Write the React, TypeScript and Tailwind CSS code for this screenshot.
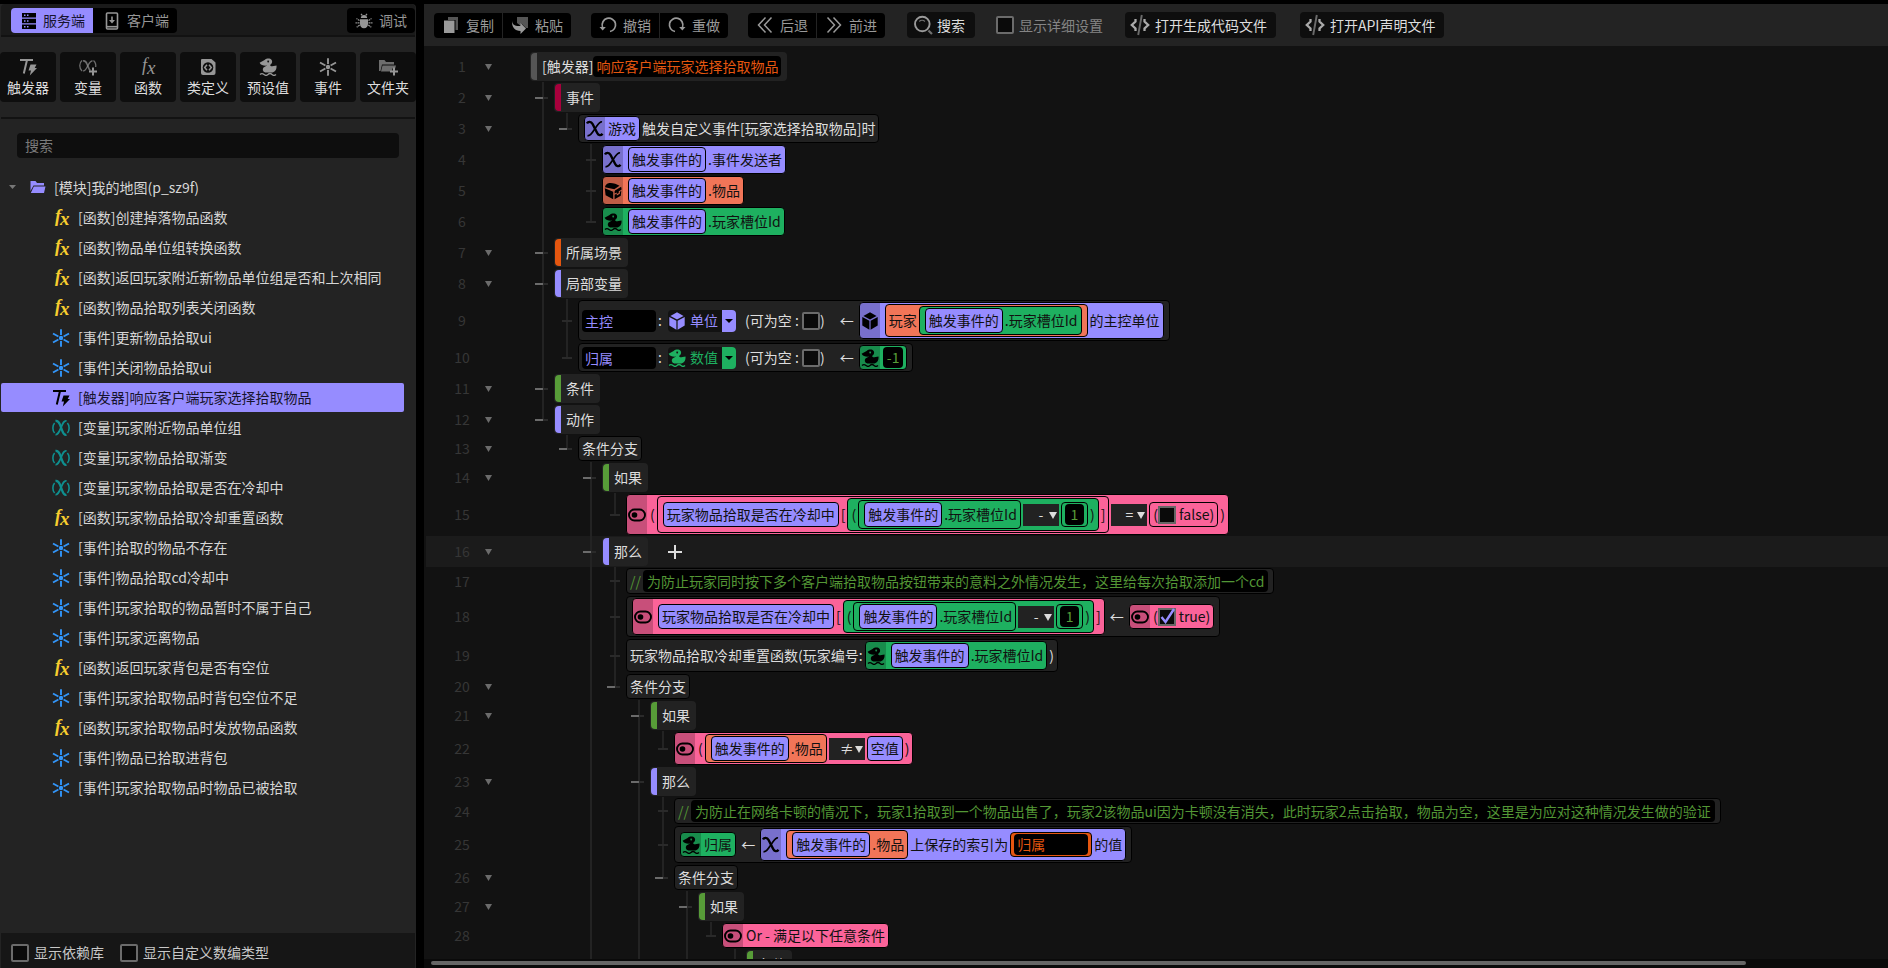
import { useState } from 'react';
import type { ReactNode } from 'react';

type IconProps = { className?: string };

const FxIcon = ({ className = '' }: IconProps) => (
    <svg viewBox="0 0 18 18" className={`overflow-visible ${className}`} fill="currentColor">
        <text x="3" y="13" fontFamily="Liberation Serif, serif" fontStyle="italic" fontSize="18">f</text>
        <text x="8" y="16" fontFamily="Liberation Serif, serif" fontStyle="italic" fontSize="19">x</text>
    </svg>
);

const EventIcon = ({ className = '' }: IconProps) => (
    <svg viewBox="0 0 18 18" className={className} stroke="currentColor" strokeWidth="1.9" fill="none">
        <path d="M9 .2V6M9 12v5.800M1 4.500l5.400 3M11.600 10.500l5.400 3M17 4.500l-5.400 3M6.400 10.500l-5.400 3" />
        <circle cx="9" cy="9" r="2.200" fill="currentColor" stroke="none" />
    </svg>
);

const TriggerIcon = ({ className = '' }: IconProps) => (
    <svg viewBox="0 0 18 18" className={className}>
        <path d="M1 2h13M8 2L4.800 15.500" stroke="currentColor" strokeWidth="2" fill="none" />
        <path d="M11.500 6.500h6l-1.800 3.500h2.300L10.800 17.500l1.200-5H9.500z" fill="currentColor" />
    </svg>
);

const VarIcon = ({ className = '' }: IconProps) => (
    <svg viewBox="0 0 18 18" className={className} stroke="currentColor" fill="none">
        <path d="M2.600 4C.3 6.500.3 11.500 2.600 14M15.400 4c2.300 2.500 2.300 7.500 0 10" strokeWidth="1.600" />
        <path d="M3.500 2c2.800-.5 3.500 1.500 4.500 3.700l2.300 6.200c.8 2.300 1.800 4.500 4.200 3.900" strokeWidth="2.300" />
        <path d="M14.500 2c-2.500-.6-3.500 2-5.500 6.500-2 4.500-3 7.500-5.500 7" strokeWidth="1.800" />
    </svg>
);

const VarAddIcon = ({ className = '' }: IconProps) => (
    <svg viewBox="0 0 20 18" className={className} stroke="currentColor" fill="none">
        <path d="M4 2.500C1 5 1 10 4 13M15.500 2.500c2.200 2 2.600 4 2.200 6.500" strokeWidth="1.300" opacity=".7" />
        <path d="M5 3c2-.6 3 .4 4 3l1.500 3.500c.5 1.500 1 2.500 2 3" strokeWidth="1.700" opacity=".7" />
        <path d="M14.500 3c-2-.3-3 1.500-4.700 4.700C8 11.500 7 13.300 5 12.800" strokeWidth="1.300" opacity=".7" />
        <path d="M15 9.500v8M11 13.500h8" strokeWidth="2" />
    </svg>
);

const ClassIcon = ({ className = '' }: IconProps) => (
    <svg viewBox="0 0 18 18" className={className}>
        <path d="M3 1h9.500L16.500 4.500V15a2 2 0 0 1-2 2H4a2 2 0 0 1-2-2V2a1 1 0 0 1 1-1z" fill="currentColor" />
        <circle cx="9" cy="9.500" r="5.300" fill="#0e0e0e" />
        <path d="M8 6.700L5.700 9.500 8 12.300M10 6.700l2.300 2.800L10 12.300" stroke="currentColor" strokeWidth="1.500" fill="none" />
    </svg>
);

const DuckIcon = ({ className = '' }: IconProps) => (
    <svg viewBox="0 0 18 18" className={className}>
        <path
            fillRule="evenodd"
            d="M.6 4.800L5.600 2C7.500.4 11 0 12.500 1.800c1.300 1.700.5 3.800-1.200 5-.5.800.5 1.700 2 1.500l4.200-.8c.4 3.300-1 6.200-4 7H6.300c-2.600-.8-3.200-3.200-1.800-5L8 7.600C5 7.800 2 7.600.6 4.800zM9.200 2.600a.9.900 0 1 0 .01 0z"
            fill="currentColor"
        />
        <path d="M1 16.500c1.300-1.200 2.600-1.200 4 0s2.700 1.200 4 0 2.700-1.200 4 0 2.700 1.200 4 0" stroke="currentColor" strokeWidth="1.400" fill="none" />
    </svg>
);

const FolderAddIcon = ({ className = '' }: IconProps) => (
    <svg viewBox="0 0 20 18" className={className}>
        <path d="M1 2h5.500l1.500 2h8v2.500H4L2.500 13H1z" fill="currentColor" opacity=".7" />
        <path d="M4.500 7.500H18l-.8 3h-3v3H3z" fill="currentColor" opacity=".7" />
        <path d="M16 9.500v8M12 13.500h8" stroke="currentColor" strokeWidth="2" />
    </svg>
);

const FolderIcon = ({ className = '' }: IconProps) => (
    <svg viewBox="0 0 16 14" className={className} fill="currentColor">
        <path d="M.5 1h5L7 3h7v2.500H3.500L.5 11z" />
        <path d="M3.800 6.500H15.500L14 13H.8z" />
    </svg>
);

const ServerIcon = ({ className = '' }: IconProps) => (
    <svg viewBox="0 0 16 16" className={className}>
        <path d="M1 0h14v4.500H1zM1 5.700h14v4.600H1zM1 11.500h14V16H1z" fill="currentColor" />
        <path d="M3 2.200h1.500M6 2.200h1.500M3 8h1.500M6 8h1.500M3 13.800h1.500M6 13.800h1.500" stroke="#968cff" strokeWidth="1.400" />
    </svg>
);

const ClientIcon = ({ className = '' }: IconProps) => (
    <svg viewBox="0 0 14 18" className={className} stroke="currentColor" fill="none" strokeWidth="1.600">
        <rect x="1.500" y="1" width="11" height="16" rx="1" />
        <path d="M7 4.500V9" />
        <path d="M4 8h6l-3 3.500z" fill="currentColor" stroke="none" />
        <path d="M2 14.700h10" />
    </svg>
);

const BugIcon = ({ className = '' }: IconProps) => (
    <svg viewBox="0 0 18 16" className={className}>
        <path d="M5 6.200h8V11c0 2.500-1.500 4.200-4 4.200S5 13.500 5 11zM5.800 5c.2-2 1.500-3 3.200-3s3 1 3.200 3z" fill="currentColor" />
        <path d="M6 .8l1.400 1.800M12 .8l-1.400 1.800M4.500 7.500L1.500 5.500M4.500 9.800H.5M4.700 12l-3 2.200M13.500 7.500l3-2M13.500 9.800h4M13.300 12l3 2.200" stroke="currentColor" strokeWidth="1.200" strokeDasharray="2 .6" />
    </svg>
);

const XIcon = ({ className = '' }: IconProps) => (
    <svg viewBox="0 0 18 18" className={className} stroke="currentColor" fill="none">
        <path d="M1 3.500C2 1.600 5 .8 6.600 4l4.600 9c1.200 2.400 3.600 3 5.300.8" strokeWidth="2.400" />
        <path d="M16 2c-2.500-.6-4 2.500-6.800 6.300C6 13 4 16.500 1.500 15.500" strokeWidth="1.700" />
    </svg>
);

const ChestIcon = ({ className = '' }: IconProps) => (
    <svg viewBox="0 0 18 18" className={className} fill="currentColor">
        <path d="M4.500 1.300C7 .2 12.500 1.900 15.500 3.700L10.300 7.200 1 5.200C1.300 3.300 2.500 1.800 4.500 1.300z" />
        <path d="M.8 6.300l8.400 3.400v7.500L1.600 13.200zM10.600 9.600c.2-1 .7-1.400 1.600-1.900l4.900-3c.4 1 .5 2 .4 3.100l-2.700 1.400-.1 1.900-1.800.9-.2-1.500-2.100 1z" />
        <path d="M10.600 12.700l2-1 .3 1.700 3-1.700V9.800l1.400-.8-.5 4.800-6.200 3.400z" />
    </svg>
);

const CubeIcon = ({ className = '' }: IconProps) => (
    <svg viewBox="0 0 18 18" className={className} fill="currentColor">
        <path d="M9 .3l6.600 3.600L9 7.400 2.400 3.900z" />
        <path d="M1.300 5l7.100 3.700v9L1.300 13.600zM16.700 5L9.600 8.700v9l7.100-4.100z" />
    </svg>
);

const BoolIcon = ({ className = '' }: IconProps) => (
    <svg viewBox="0 0 18 18" className={className}>
        <rect x="1" y="3.500" width="16" height="11" rx="5.500" fill="none" stroke="currentColor" strokeWidth="1.900" />
        <circle cx="6.500" cy="9" r="2.800" fill="currentColor" />
    </svg>
);

const CopyIcon = ({ className = '' }: IconProps) => (
    <svg viewBox="0 0 16 18" className={className} fill="currentColor">
        <path d="M5 1h10v13h-2.500V4H5z" opacity=".55" />
        <path d="M1 4.500h10.500V17H1z" />
    </svg>
);

const PasteIcon = ({ className = '' }: IconProps) => (
    <svg viewBox="0 0 18 18" className={className} fill="currentColor">
        <path d="M6 1h11v11h-2L10.500 7.500v3L6 7z" opacity=".55" />
        <path d="M1 4.500c0 4 3 6 8.500 5.500V7l5.500 5.500L9.500 18v-3C4 15 .5 11 1 4.500z" />
    </svg>
);

const UndoIcon = ({ className = '' }: IconProps) => (
    <svg viewBox="0 0 18 18" className={className} stroke="currentColor" strokeWidth="1.700" fill="none">
        <path d="M3.500 11A6.700 6.700 0 1 1 11 15.500" />
        <path d="M.5 11h6.300l-3.100 3.600z" fill="currentColor" stroke="none" />
    </svg>
);

const RedoIcon = ({ className = '' }: IconProps) => (
    <svg viewBox="0 0 18 18" className={className} stroke="currentColor" strokeWidth="1.700" fill="none">
        <path d="M14.500 11A6.700 6.700 0 1 0 7 15.500" />
        <path d="M17.500 11h-6.300l3.100 3.600z" fill="currentColor" stroke="none" />
    </svg>
);

const BackIcon = ({ className = '' }: IconProps) => (
    <svg viewBox="0 0 16 18" className={className} stroke="currentColor" strokeWidth="1.500" fill="none">
        <path d="M8.500 1.500l-7 7.500 7 7.500M14.500 1.500l-7 7.500 7 7.500" />
    </svg>
);

const ForwardIcon = ({ className = '' }: IconProps) => (
    <svg viewBox="0 0 16 18" className={className} stroke="currentColor" strokeWidth="1.500" fill="none">
        <path d="M1.500 1.500l7 7.500-7 7.500M7.500 1.500l7 7.500-7 7.500" />
    </svg>
);

const SearchIcon = ({ className = '' }: IconProps) => (
    <svg viewBox="0 0 20 20" className={className} stroke="currentColor" fill="none">
        <circle cx="9.300" cy="9" r="7.300" strokeWidth="1.900" />
        <path d="M6.300 6.500c1.500-1.700 4-1.700 5.600 0" strokeWidth="1.200" opacity=".7" />
        <path d="M15.500 15.500l3.500 3.500" strokeWidth="2.200" opacity=".7" />
    </svg>
);

const CodeIcon = ({ className = '' }: IconProps) => (
    <svg viewBox="0 0 22 22" className={className} stroke="currentColor" fill="none">
        <path d="M6.500 5v2.500L2.800 11l3.700 3.500V17M15.500 5v2.500l3.700 3.500-3.700 3.500V17" strokeWidth="2.300" />
        <path d="M12.800 1L9.200 21" strokeWidth="1.900" opacity=".6" />
    </svg>
);

const Caret = ({ className = '' }: IconProps) => (
    <svg viewBox="0 0 8 7" preserveAspectRatio="none" className={className} fill="currentColor">
        <path d="M0 0h8L4 7z" />
    </svg>
);

const kindIcons = { fx: FxIcon, event: EventIcon, trigger: TriggerIcon, variable: VarIcon };
const kindColors = {
    fx: 'font-bold text-[#f7cd2f]',
    event: 'text-[#3296fa]',
    trigger: 'text-black',
    variable: 'text-[#0f8f8f]',
};

const treeItems: { kind: keyof typeof kindIcons; label: string }[] = [
    { kind: 'fx', label: '[函数]创建掉落物品函数' },
    { kind: 'fx', label: '[函数]物品单位组转换函数' },
    { kind: 'fx', label: '[函数]返回玩家附近新物品单位组是否和上次相同' },
    { kind: 'fx', label: '[函数]物品拾取列表关闭函数' },
    { kind: 'event', label: '[事件]更新物品拾取ui' },
    { kind: 'event', label: '[事件]关闭物品拾取ui' },
    { kind: 'trigger', label: '[触发器]响应客户端玩家选择拾取物品' },
    { kind: 'variable', label: '[变量]玩家附近物品单位组' },
    { kind: 'variable', label: '[变量]玩家物品拾取渐变' },
    { kind: 'variable', label: '[变量]玩家物品拾取是否在冷却中' },
    { kind: 'fx', label: '[函数]玩家物品拾取冷却重置函数' },
    { kind: 'event', label: '[事件]拾取的物品不存在' },
    { kind: 'event', label: '[事件]物品拾取cd冷却中' },
    { kind: 'event', label: '[事件]玩家拾取的物品暂时不属于自己' },
    { kind: 'event', label: '[事件]玩家远离物品' },
    { kind: 'fx', label: '[函数]返回玩家背包是否有空位' },
    { kind: 'event', label: '[事件]玩家拾取物品时背包空位不足' },
    { kind: 'fx', label: '[函数]玩家拾取物品时发放物品函数' },
    { kind: 'event', label: '[事件]物品已拾取进背包' },
    { kind: 'event', label: '[事件]玩家拾取物品时物品已被拾取' },
];

const tools = [
    { label: '触发器', Icon: TriggerIcon },
    { label: '变量', Icon: VarAddIcon },
    { label: '函数', Icon: FxIcon },
    { label: '类定义', Icon: ClassIcon },
    { label: '预设值', Icon: DuckIcon },
    { label: '事件', Icon: EventIcon },
    { label: '文件夹', Icon: FolderAddIcon },
];

const Check = ({ label, className = '' }: { label: string; className?: string }) => (
    <label className={`flex items-center gap-[5px] ${className}`}>
        <input type="checkbox" className="size-[18px] appearance-none rounded-xs border-2 border-[#6b6b6b] bg-[#0a0a0a]" />
        {label}
    </label>
);

function Sidebar() {
    const [selected, setSelected] = useState(6);
    return (
        <aside className="flex w-[416px] shrink-0 flex-col rounded-tr bg-[#232323]">
            <div className="mx-px flex justify-between rounded-t border-b-2 border-[#121212] bg-[#1a1a1a] pt-1 pb-0.5 pl-2.5">
                <div className="flex">
                    <button className="flex h-[25px] items-center gap-[6px] rounded-l bg-[#968cff] pr-2 pl-2.5 text-[#17142e]">
                        <ServerIcon className="h-4 w-4 text-black" />
                        服务端
                    </button>
                    <button className="flex h-[25px] items-center gap-2 rounded-r bg-black pr-2 pl-3 text-[#969696]">
                        <ClientIcon className="h-[18px] w-[14px]" />
                        客户端
                    </button>
                </div>
                <button className="flex h-[25px] items-center gap-1.5 rounded bg-black px-2 text-[#969696]">
                    <BugIcon className="h-4 w-[18px]" />
                    调试
                </button>
            </div>
            <div className="mt-[15px] grid grid-cols-7 gap-1">
                {tools.map(({ label, Icon }) => (
                    <button key={label} className="flex h-[50px] flex-col items-center gap-px rounded bg-[#0e0e0e] pt-1.5 text-[#ddd]">
                        <Icon className="h-[18px] w-5 text-[#969696]" />
                        {label}
                    </button>
                ))}
            </div>
            <hr className="mx-px mt-[15px] border-t-2 border-[#121212]" />
            <input
                aria-label="搜索"
                placeholder="搜索"
                className="mx-[17px] mt-3.5 h-[25px] rounded bg-[#0e0e0e] px-2 pb-0.5 outline-none placeholder:text-[#7b7b7b]"
            />
            <div className="mt-3.5 flex-1 overflow-hidden text-[#d6d6d6]">
                <button className="flex h-[30px] w-full items-center pl-[9px]">
                    <Caret className="h-1 w-[7px] text-[#777]" />
                    <FolderIcon className="mr-2 ml-3.5 h-3.5 w-4 text-[#968cff]" />
                    [模块]我的地图(p_sz9f)
                </button>
                <ul className="mt-px mr-3 ml-px">
                    {treeItems.map((item, index) => {
                        const Icon = kindIcons[item.kind];
                        return (
                            <li key={index} className="pb-px">
                                <button
                                    onClick={() => setSelected(index)}
                                    className={`flex h-[29px] w-full items-center gap-2 rounded-xs pl-[51px] ${
                                        selected === index ? 'bg-[#968cff] text-[#17142e]' : ''
                                    }`}
                                >
                                    <Icon className={`size-[18px] ${kindColors[item.kind]}`} />
                                    {item.label}
                                </button>
                            </li>
                        );
                    })}
                </ul>
            </div>
            <div className="mx-px flex h-[35px] items-center gap-4 bg-[#161616] pt-1 pl-2.5 text-[#c8c8c8]">
                <Check label="显示依赖库" />
                <Check label="显示自定义数编类型" />
            </div>
        </aside>
    );
}

const toolbarGroups = [
    [{ label: '复制', Icon: CopyIcon }, { label: '粘贴', Icon: PasteIcon }],
    [{ label: '撤销', Icon: UndoIcon }, { label: '重做', Icon: RedoIcon }],
    [{ label: '后退', Icon: BackIcon }, { label: '前进', Icon: ForwardIcon }],
];

function Toolbar() {
    return (
        <div className="flex h-[42px] shrink-0 items-center bg-[#232323] pl-2.5">
            <div className="flex gap-5">
                {toolbarGroups.map((group, i) => (
                    <div key={i} className="flex gap-px">
                        {group.map(({ label, Icon }) => (
                            <button
                                key={label}
                                className="flex h-[25px] w-[68px] items-center justify-end gap-1.5 bg-black pr-2 text-[#9a9a9a] first:rounded-l last:rounded-r"
                            >
                                <Icon className="size-[18px]" />
                                {label}
                            </button>
                        ))}
                    </div>
                ))}
            </div>
            <button className="ml-[22px] flex h-[26px] items-center gap-1 rounded bg-[#0e0e0e] pr-2.5 pl-1.5 text-[#ddd]">
                <SearchIcon className="size-5 text-[#9a9a9a]" />
                搜索
            </button>
            <Check label="显示详细设置" className="ml-[21px] text-[#858585]" />
            <button className="ml-[22px] flex h-[26px] items-center gap-1 rounded bg-[#0e0e0e] pr-[9px] pl-1 text-[#ddd]">
                <CodeIcon className="size-[22px] text-[#aaa]" />
                打开生成代码文件
            </button>
            <button className="ml-6 flex h-[26px] items-center gap-1 rounded bg-[#0e0e0e] pr-[9px] pl-1 text-[#ddd]">
                <CodeIcon className="size-[22px] text-[#aaa]" />
                打开API声明文件
            </button>
        </div>
    );
}

const chipColors = {
    purple: 'bg-[#968cff]',
    orange: 'bg-[#f17558]',
    green: 'bg-[#1eb060]',
    pink: 'bg-[#fb6399]',
};

type ChipProps = { color: keyof typeof chipColors; Icon?: (p: IconProps) => ReactNode; outer?: boolean; children: ReactNode };

function Chip({ color, Icon, outer, children }: ChipProps) {
    return (
        <span className={`flex items-stretch overflow-hidden rounded border border-black text-[#111] ${chipColors[color]} ${outer ? '' : 'mx-0.5'}`}>
            {Icon && (
                <span className="flex w-5 items-center justify-center bg-black/20 text-black">
                    <Icon className="size-[18px]" />
                </span>
            )}
            <span className="flex items-center px-[3px] py-px whitespace-pre">{children}</span>
        </span>
    );
}

const Box = ({ children }: { children: ReactNode }) => (
    <span className="flex items-center rounded border border-black bg-[#222] px-[3px] py-px whitespace-pre">{children}</span>
);

const barColors = {
    gray: 'bg-[#555]',
    crimson: 'bg-[#a8003c]',
    orange: 'bg-[#e5560f]',
    purple: 'bg-[#968cff]',
    green: 'bg-[#579c38]',
};

const Title = ({ bar, children }: { bar: keyof typeof barColors; children: ReactNode }) => (
    <span className="flex h-[29px] items-center rounded bg-[#222] pr-1.5 pl-px whitespace-pre">
        <span className={`mr-[5px] h-[27px] w-1.5 rounded-l ${barColors[bar]}`} />
        {children}
    </span>
);

const Op = ({ value }: { value: string }) => (
    <span className="relative">
        <select
            aria-label="运算符"
            defaultValue={value}
            className="block h-[22px] w-9 appearance-none bg-[#222] text-center text-[#ddd] [text-align-last:center]"
        >
            <option>{value}</option>
        </select>
        <Caret className="pointer-events-none absolute top-2 right-0.5 h-[7px] w-2 text-[#ddd]" />
    </span>
);

const NumberChip = ({ value, Icon }: { value: string; Icon?: ChipProps['Icon'] }) => (
    <Chip color="green" Icon={Icon}>
        <input
            aria-label="数值"
            defaultValue={value}
            className="field-sizing-content h-[21px] min-w-[19px] rounded bg-black px-1 text-center text-[#579c38] outline-none"
        />
    </Chip>
);

const Bool = ({ value, Icon }: { value: boolean; Icon?: ChipProps['Icon'] }) => (
    <Chip color="pink" Icon={Icon}>
        (
        <label className="flex items-center gap-[3px]">
            <span className="relative">
                <input type="checkbox" defaultChecked={value} className="peer block size-[18px] appearance-none border-2 border-[#666] bg-[#0a0a0a]" />
                <svg viewBox="0 0 18 18" className="pointer-events-none absolute inset-0 hidden size-[18px] peer-checked:block" fill="none" stroke="#968cff" strokeWidth="2.400">
                    <path d="M3.500 9l4 5L16 1" />
                </svg>
            </span>
            {String(value)})
        </label>
    </Chip>
);

const EventOf = () => <Chip color="purple">触发事件的</Chip>;

const Slot = ({ Icon, outer }: { Icon?: ChipProps['Icon']; outer?: boolean }) => (
    <Chip color="green" Icon={Icon} outer={outer}>
        <EventOf />.玩家槽位Id
    </Chip>
);

const Item = ({ Icon, outer }: { Icon?: ChipProps['Icon']; outer?: boolean }) => (
    <Chip color="orange" Icon={Icon} outer={outer}>
        <EventOf />.物品
    </Chip>
);

// 玩家物品拾取是否在冷却中[(slot - 1)]
const CooldownOf = () => (
    <>
        <Chip color="purple">玩家物品拾取是否在冷却中</Chip>[
        <Chip color="green">
            (<Slot />
            <Op value="-" />
            <NumberChip value="1" />)
        </Chip>
        ]
    </>
);

const Comment = ({ text }: { text: string }) => (
    <span className="flex items-center rounded border border-black bg-[#222] px-[3px] py-px text-[#539635]">
        //
        <input aria-label="注释" defaultValue={text} className="mx-0.5 field-sizing-content h-[22px] rounded bg-black px-1 outline-none" />
    </span>
);

type LocalVarProps = { name: string; type: string; green?: boolean; Icon: (p: IconProps) => ReactNode; children: ReactNode };

const LocalVar = ({ name, type, green, Icon, children }: LocalVarProps) => (
    <Box>
        <input aria-label="变量名" defaultValue={name} className="mr-0.5 h-[22px] w-[74px] rounded bg-black px-[3px] text-[#968cff] outline-none" />
        :
        <span className={`relative mr-1.5 ml-1.5 flex items-center gap-1 overflow-hidden rounded bg-[#121212] ${green ? 'text-[#1eb060]' : 'text-[#968cff]'}`}>
            <Icon className="size-[18px]" />
            <select aria-label="类型" defaultValue={type} className="h-[22px] w-[46px] appearance-none">
                <option>{type}</option>
            </select>
            <span className={`pointer-events-none absolute inset-y-0 right-0 flex w-3.5 items-center justify-center ${green ? 'bg-[#1eb060]' : 'bg-[#968cff]'}`}>
                <Caret className="h-1 w-2 text-black" />
            </span>
        </span>
        <label className="flex items-center">
            {' (可为空 : '}
            <input type="checkbox" className="size-[18px] appearance-none rounded-xs border-2 border-[#6b6b6b] bg-[#0a0a0a]" />)
        </label>
        <span className="ml-[15px]">{'← '}</span>
        {children}
    </Box>
);

type Line = { level: number; open?: boolean; active?: boolean; node: ReactNode };

const lines: Line[] = [
    {
        level: 0,
        open: true,
        node: (
            <Title bar="gray">
                [触发器]
                <input
                    aria-label="触发器名称"
                    defaultValue="响应客户端玩家选择拾取物品"
                    className="field-sizing-content h-[21px] rounded bg-black px-[3px] text-[#e5560f] outline-none"
                />
            </Title>
        ),
    },
    { level: 1, open: true, node: <Title bar="crimson">事件</Title> },
    {
        level: 2,
        open: true,
        node: (
            <Box>
                <Chip color="purple" Icon={XIcon}>游戏</Chip>触发自定义事件[玩家选择拾取物品]时
            </Box>
        ),
    },
    { level: 3, node: <Chip outer color="purple" Icon={XIcon}><EventOf />.事件发送者</Chip> },
    { level: 3, node: <Item outer Icon={ChestIcon} /> },
    { level: 3, node: <Slot outer Icon={DuckIcon} /> },
    { level: 1, open: true, node: <Title bar="orange">所属场景</Title> },
    { level: 1, open: true, node: <Title bar="purple">局部变量</Title> },
    {
        level: 2,
        node: (
            <LocalVar name="主控" type="单位" Icon={CubeIcon}>
                <Chip color="purple" Icon={CubeIcon}>
                    <Chip color="orange">玩家<Slot /></Chip>的主控单位
                </Chip>
            </LocalVar>
        ),
    },
    {
        level: 2,
        node: (
            <LocalVar name="归属" type="数值" green Icon={DuckIcon}>
                <NumberChip value="-1" Icon={DuckIcon} />
            </LocalVar>
        ),
    },
    { level: 1, open: true, node: <Title bar="green">条件</Title> },
    { level: 1, open: true, node: <Title bar="purple">动作</Title> },
    { level: 2, open: true, node: <Box>条件分支</Box> },
    { level: 3, open: true, node: <Title bar="green">如果</Title> },
    {
        level: 4,
        node: (
            <Chip outer color="pink" Icon={BoolIcon}>
                (<Chip color="pink"><CooldownOf /></Chip>
                <Op value="=" />
                <Bool value={false} />)
            </Chip>
        ),
    },
    {
        level: 3,
        open: true,
        active: true,
        node: (
            <>
                <Title bar="purple">那么</Title>
                <button aria-label="添加" className="ml-5 text-[#ddd]">
                    <svg viewBox="0 0 14 14" className="size-3.5" stroke="currentColor" strokeWidth="2">
                        <path d="M7 0v14M0 7h14" />
                    </svg>
                </button>
            </>
        ),
    },
    { level: 4, node: <Comment text="为防止玩家同时按下多个客户端拾取物品按钮带来的意料之外情况发生，这里给每次拾取添加一个cd" /> },
    {
        level: 4,
        node: (
            <Box>
                <Chip color="pink" Icon={BoolIcon}><CooldownOf /></Chip>
                {' ← '}
                <Bool value Icon={BoolIcon} />
            </Box>
        ),
    },
    { level: 4, node: <Box>玩家物品拾取冷却重置函数(玩家编号:<Slot Icon={DuckIcon} />)</Box> },
    { level: 4, open: true, node: <Box>条件分支</Box> },
    { level: 5, open: true, node: <Title bar="green">如果</Title> },
    {
        level: 6,
        node: (
            <Chip outer color="pink" Icon={BoolIcon}>
                (<Item />
                <Op value="≠" />
                <Chip color="purple">空值</Chip>)
            </Chip>
        ),
    },
    { level: 5, open: true, node: <Title bar="purple">那么</Title> },
    { level: 6, node: <Comment text="为防止在网络卡顿的情况下，玩家1拾取到一个物品出售了，玩家2该物品ui因为卡顿没有消失，此时玩家2点击拾取，物品为空，这里是为应对这种情况发生做的验证" /> },
    {
        level: 6,
        node: (
            <Box>
                <Chip color="green" Icon={DuckIcon}>归属</Chip>
                {' ← '}
                <Chip color="purple" Icon={XIcon}>
                    <Item />上保存的索引为
                    <span className="mx-0.5 flex rounded border border-black bg-[#e5560f] px-[3px] py-px">
                        <input aria-label="索引" defaultValue="归属" className="h-[21px] w-[74px] rounded bg-black px-[3px] text-[#e5560f] outline-none" />
                    </span>
                    的值
                </Chip>
            </Box>
        ),
    },
    { level: 6, open: true, node: <Box>条件分支</Box> },
    { level: 7, open: true, node: <Title bar="green">如果</Title> },
    { level: 8, node: <Chip outer color="pink" Icon={BoolIcon}>Or - 满足以下任意条件</Chip> },
    { level: 9, open: true, node: <Title bar="green">条件</Title> },
];

// levels that still have siblings below the last loaded line
const openLevels = [3, 5, 7, 9];

function hasNext(index: number, level: number) {
    for (let i = index + 1; i < lines.length; i++) {
        if (lines[i].level < level) return false;
        if (lines[i].level === level) return true;
    }
    return openLevels.includes(level);
}

function Guides({ index }: { index: number }) {
    const { level, open } = lines[index];
    return (
        <>
            {Array.from({ length: level }, (_, i) => i + 1).map((l) => {
                const own = l === level;
                const next = hasNext(index, l);
                return (
                    <span key={l} className="relative w-6 shrink-0">
                        {(own || next) && <span className={`absolute top-0 left-3 w-0.5 bg-[#232323] ${next ? 'h-full' : 'h-1/2'}`} />}
                        {own && <span className="absolute top-1/2 left-2 h-0.5 w-2.5 -translate-y-1/2 bg-[#2a2a2a]" />}
                        {own && open && <span className="absolute top-1/2 left-[5px] h-0.5 w-2 -translate-y-1/2 bg-[#6b6b6b]" />}
                    </span>
                );
            })}
        </>
    );
}

function Editor() {
    return (
        <div className="relative min-h-0 flex-1 overflow-hidden bg-[#121212] pt-[5px] pl-0.5">
            {lines.map((line, index) => (
                <div key={index} className={`flex ${line.active ? 'bg-[#1b1b1b]' : ''}`}>
                    <span className="ml-[18px] w-9 shrink-0 self-center text-center text-[#363636]">{index + 1}</span>
                    <span className="mr-[34px] flex w-4 shrink-0 items-center justify-center">
                        {line.open && (
                            <button aria-label="折叠" className="text-[#6b6b6b]">
                                <Caret className="h-1.5 w-[7px]" />
                            </button>
                        )}
                    </span>
                    <Guides index={index} />
                    <div className="flex shrink-0 items-center py-px whitespace-nowrap text-[#ddd]">{line.node}</div>
                </div>
            ))}
            <div className="absolute inset-x-0 bottom-0 bg-[#0a0a0a] pt-0.5 pr-[142px] pb-[3px] pl-[7px]">
                <div className="h-1 rounded-full bg-[#666]" />
            </div>
        </div>
    );
}

export default function App() {
    return (
        <div className="flex h-screen gap-2 overflow-hidden bg-black pt-1 font-['Noto_Sans_CJK_SC',sans-serif] text-[14px] leading-[21px]">
            <Sidebar />
            <main className="flex min-w-0 flex-1 flex-col">
                <Toolbar />
                <Editor />
            </main>
        </div>
    );
}
